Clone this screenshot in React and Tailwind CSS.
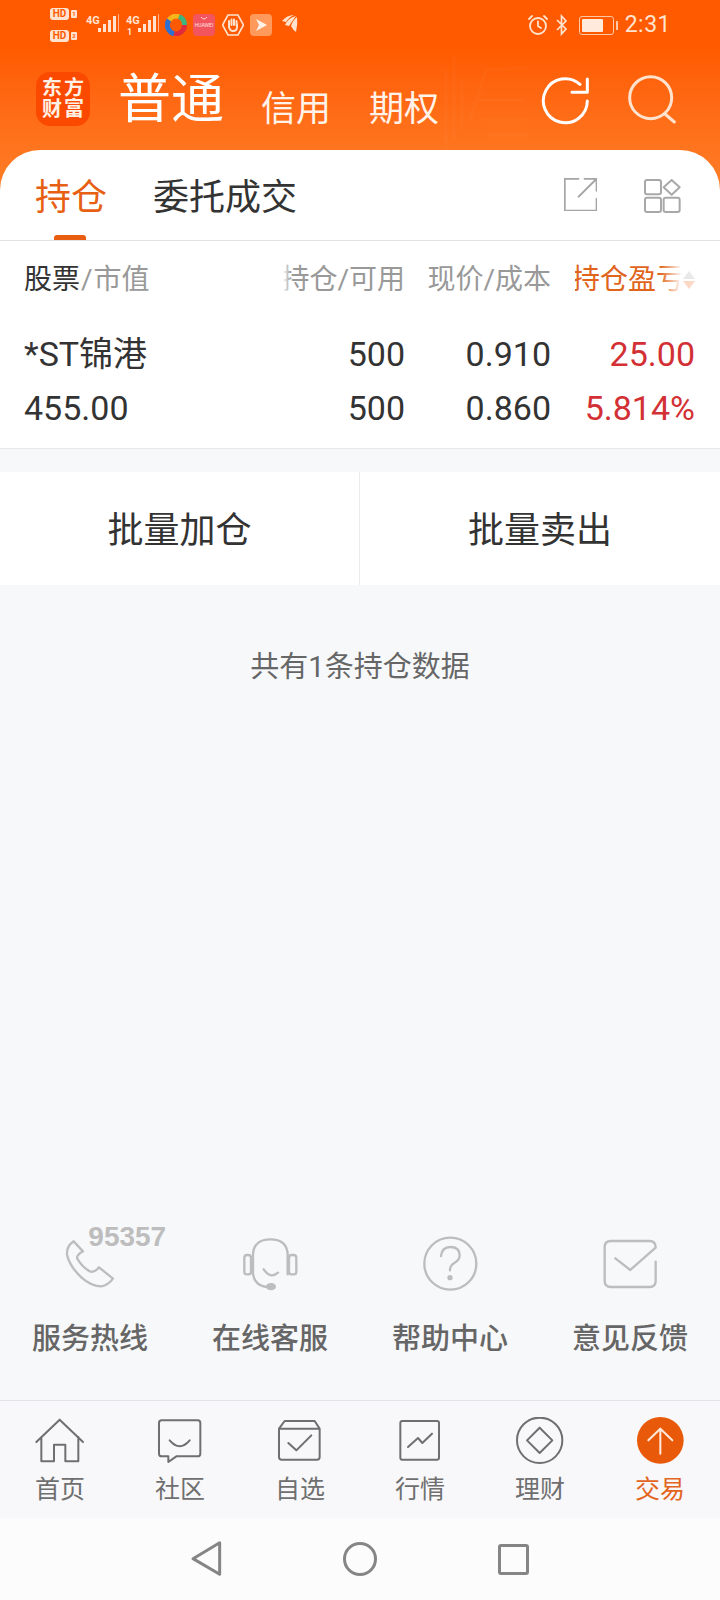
import React from "react";

// Small helper: every icon is drawn in a 3x grid, so it renders at a third of its viewBox.
function Ico({ x, y, w, h, className = "", children }) {
  return (
    <svg width={w / 3} height={h / 3} viewBox={`${x} ${y} ${w} ${h}`} fill="none" strokeLinecap="round" strokeLinejoin="round" className={`block shrink-0 ${className}`}>
      {children}
    </svg>
  );
}

function Signal({ second }) {
  return (
    <div className="relative w-[34px] h-[24px]">
      <span className="absolute left-0 top-[1px] text-[11px] font-bold leading-[12px] text-[#ffe3cf]">4G</span>
      {second && <span className="absolute left-[1px] top-[13px] text-[9px] font-bold leading-[10px] text-[#ffe3cf]">1</span>}
      <svg width="22" height="20" viewBox="0 0 22 20" className="absolute left-[12px] top-0">
        <g fill="#ffe3cf">
          <rect x="0" y="14" width="3" height="4" />
          <rect x="5" y="10" width="3" height="8" />
          <rect x="10" y="6" width="3" height="12" />
          <rect x="15" y="2" width="3" height="16" />
        </g>
        <rect x="20" y="0" width="1" height="18" fill="#ffb48a" />
      </svg>
    </div>
  );
}

function StatusBar() {
  return (
    <div className="h-[50px] flex items-start text-[#ffe3cf]">
      <div className="ml-[50px] mt-[8px] flex flex-col gap-[10px] w-[28px]">
        {["1", "2"].map((n) => (
          <div key={n} className="flex items-center gap-[2px]">
            <span className="w-[19px] h-[12px] rounded-[3px] bg-[#ffe3cf] text-[#ff5a00] text-[10px] font-bold leading-[12px] text-center">HD</span>
            <span className="w-[6px] h-[8px] rounded-[1px] bg-[#ffe3cf] text-[#ff5a00] text-[6px] font-bold leading-[8px] text-center">{n}</span>
          </div>
        ))}
      </div>
      <div className="ml-[8px] mt-[14px]"><Signal /></div>
      <div className="ml-[6px] mt-[14px]"><Signal second /></div>
      <svg width="22" height="22" viewBox="0 0 22 22" className="ml-[5px] mt-[14px]">
        <g fill="none" strokeWidth="5">
          <path d="M4 6 A9 9 0 0 1 14 2.5" stroke="#f6b51d" />
          <path d="M14 2.5 A9 9 0 0 1 19.5 11" stroke="#3fb47c" />
          <path d="M19.5 11 A9 9 0 0 1 9 19.8" stroke="#df2c3c" />
          <path d="M9 19.8 A9 9 0 0 1 4 6" stroke="#2e6fd0" />
        </g>
      </svg>
      <div className="ml-[6px] mt-[14px] w-[22px] h-[22px] rounded-[4px] bg-[#f2555e] flex flex-col items-center">
        <svg width="8" height="4" viewBox="0 0 8 4" className="mt-[3px]"><path d="M1 0 Q4 4 7 0" stroke="#ffd9d4" fill="none" /></svg>
        <span className="text-[5px] leading-[7px] mt-[1px] text-[#ffe3e0]">HUAWEI</span>
      </div>
      <svg width="22" height="22" viewBox="0 0 22 22" className="ml-[7px] mt-[14px]">
        <path d="M6 1 H16 L21.5 11 L16 21 H6 L0.5 11 Z" fill="none" stroke="#ffe3cf" strokeWidth="1.6" />
        <path d="M7 10 V7 M9.5 11 V5.5 M12 11 V5.5 M14.5 11 V7 M7 10 V13 Q8 17 11 17 Q15 17 15 13 V10" stroke="#ffe3cf" strokeWidth="2" fill="none" strokeLinecap="round" />
      </svg>
      <div className="ml-[6px] mt-[14px] w-[22px] h-[22px] rounded-[4px] bg-[#ff9a5c] flex items-center justify-center">
        <svg width="14" height="14" viewBox="0 0 14 14"><path d="M2 1 L13 7 L2 13 L5 7 Z" fill="#fff2e8" /></svg>
      </div>
      <svg width="18" height="20" viewBox="0 0 18 20" className="ml-[9px] mt-[14px]">
        <g fill="#ffe3cf">
          <path d="M1 7 Q6 1 13 1 Q8 3 5 8 Z" />
          <path d="M4 11 Q7 4 15 2 Q12 6 8 12 Z" />
          <path d="M10 12 Q12 6 16 3 Q17 10 15 18 Q12 16 10 12 Z" />
        </g>
      </svg>
      <div className="ml-auto mt-[14px] flex items-center text-[#ffe3cf]">
        <svg width="22" height="22" viewBox="0 0 22 22">
          <circle cx="11" cy="12" r="8" fill="none" stroke="#ffe3cf" strokeWidth="1.8" />
          <path d="M11 7.5 V12 L14 14 M2 5 L5 2 M17 2 L20 5" fill="none" stroke="#ffe3cf" strokeWidth="1.8" strokeLinecap="round" />
        </svg>
        <svg width="14" height="22" viewBox="0 0 14 22" className="ml-[6px]">
          <path d="M2 6 L11 15 L6.5 20 V2 L11 7 L2 16" fill="none" stroke="#ffe3cf" strokeWidth="1.7" />
        </svg>
        <div className="ml-[10px] flex items-center">
          <div className="w-[35px] h-[19px] rounded-[3px] border border-[#ffc7a3] p-[2px]">
            <div className="w-[21px] h-full rounded-[1px] bg-[#ffeadc]" />
          </div>
          <div className="ml-[2px] w-[2px] h-[9px] bg-[#ffc7a3]" />
        </div>
        <span className="ml-[7px] mr-[49px] text-[23px] leading-[22px] tracking-[0.5px] text-[#ffe3cf]">2:31</span>
      </div>
    </div>
  );
}

function Header() {
  return (
    <div className="relative h-[190px] bg-linear-to-b from-[#ff5a00] from-25% to-[#ff7e26] text-white">
      <svg width="90" height="100" viewBox="0 0 90 100" className="absolute left-[436px] top-[50px]">
        <g stroke="#ffffff" strokeOpacity="0.025" fill="none">
          <path d="M10 100 V20 M18 90 V5 M26 80 V30 M34 70 L50 20 L90 18 M40 50 H90 M46 70 H90 M52 85 H90" strokeWidth="3" />
        </g>
      </svg>
      <StatusBar />
      <div className="relative flex items-start h-[90px]">
        <div className="ml-[36px] mt-[22px] w-[54px] h-[54px] rounded-[14px] bg-[#fb4a00] grid grid-cols-2 place-items-center px-[5px] py-[6px] text-[20px] leading-[21px] font-bold text-[#fff0e4]">
          <span>东</span><span>方</span><span>财</span><span>富</span>
        </div>
        <span className="ml-[28px] mt-[15px] text-[53px] leading-[70px]">普通</span>
        <span className="ml-[37px] mt-[35px] text-[35px] leading-[50px] text-[#fff3ea]">信用</span>
        <span className="ml-[38px] mt-[35px] text-[35px] leading-[50px] text-[#fff3ea]">期权</span>
        <Ico x={-6} y={-6} w={156} h={156} className="ml-[101px] mt-[25px]">
          <path d="M136 72 A66 66 0 1 1 114 22" stroke="#fff" strokeWidth="9" />
          <path d="M90 46 H136 V6" stroke="#fff" strokeWidth="9" />
        </Ico>
        <Ico x={-6} y={-6} w={156} h={156} className="ml-[35px] mt-[24px]">
          <circle cx="65" cy="65" r="63" stroke="#ffe3cf" strokeWidth="9" />
          <path d="M108 114 L136 138" stroke="#ffe3cf" strokeWidth="9" />
        </Ico>
      </div>
    </div>
  );
}

function Tabs() {
  return (
    <div className="relative h-[91px] flex items-start border-b border-[#e2e2e2]">
      <div className="relative ml-[35px] mt-[23px] text-[36px] leading-[50px] text-[#e65f12]">
        持仓
        <div className="absolute left-[19px] top-[62px] w-[32px] h-[5px] rounded-t-[3px] bg-[#e85d10]" />
      </div>
      <span className="ml-[46px] mt-[23px] text-[36px] leading-[50px] text-[#333]">委托成交</span>
      <Ico x={0} y={0} w={100} h={100} className="ml-auto mt-[28px]">
        <path d="M43 2 H2 V98 H98 V62 M62 2 H98 V38 M44 56 L98 2" stroke="#a5a5a5" strokeWidth="6" />
      </Ico>
      <Ico x={0} y={0} w={110} h={102} className="ml-[47px] mr-[39px] mt-[29px]">
        <g stroke="#a8a8a8" strokeWidth="6">
          <rect x="3" y="3" width="48" height="43" rx="6" />
          <path d="M83 3 L107 25 L83 47 L59 25 Z" />
          <rect x="3" y="56" width="48" height="43" rx="6" />
          <rect x="59" y="56" width="48" height="43" rx="6" />
        </g>
      </Ico>
    </div>
  );
}

// Column heading clipped at its left edge, with a soft fade over the cut.
function ClippedHead({ children, className = "" }) {
  return (
    <div className={`relative overflow-hidden flex justify-end whitespace-nowrap ${className}`}>
      <span className="shrink-0">{children}</span>
      <div className="absolute left-0 top-0 bottom-0 w-[8px] bg-linear-to-r from-white to-transparent" />
    </div>
  );
}

function Holdings() {
  const grid = "grid grid-cols-[259px_122px_146px_144px] pl-[24px] pr-[25px]";
  return (
    <div className="bg-white border-b border-[#e8e8e8]">
      <div className={`${grid} pt-[19px] h-[64px] text-[28px] leading-[40px] text-[#999]`}>
        <div><span className="text-[#333]">股票</span><span className="mx-[1px]">/</span><span>市值</span></div>
        <ClippedHead>持仓/可用</ClippedHead>
        <ClippedHead>现价/成本</ClippedHead>
        <div className="flex justify-end">
          <div className="relative w-[107px] overflow-hidden text-[#e0641b] whitespace-nowrap flex justify-end">
            <span className="shrink-0 mr-[-2px]">持仓盈亏</span>
            <div className="absolute right-0 top-0 bottom-0 w-[22px] bg-linear-to-l from-white to-transparent" />
          </div>
          <div className="w-[13px] flex flex-col items-center gap-[2px] pt-[11px]">
            <div className="w-0 h-0 border-x-[6px] border-x-transparent border-b-[8px] border-b-[#e9e9e9]" />
            <div className="w-0 h-0 border-x-[6px] border-x-transparent border-t-[8px] border-t-[#fbd9c6]" />
          </div>
        </div>
      </div>
      <div className={`${grid} mt-[22px] text-[34px] leading-[54px] text-[#333] text-right`}>
        <div className="text-left">*ST锦港</div>
        <div>500</div>
        <div>0.910</div>
        <div className="text-[#d23034]">25.00</div>
        <div className="text-left">455.00</div>
        <div>500</div>
        <div>0.860</div>
        <div className="text-[#d23034]">5.814%</div>
      </div>
      <div className="h-[13px]" />
    </div>
  );
}

function Help() {
  const stroke = 7;
  const items = [
    {
      label: "服务热线",
      icon: (
        <div className="relative">
          <Ico x={190} y={90} w={160} h={160}>
            <path d="M222 100 Q200 115 202 140 Q210 175 245 208 Q275 235 305 235 Q325 232 340 212 L298 178 Q285 195 270 190 Q245 175 232 150 Q232 140 250 130 Z" stroke="#bdbdbd" strokeWidth={stroke} />
          </Ico>
          <span className="absolute left-[25px] top-[-13px] text-[28px] leading-[24px] font-bold text-[#bdbdbd] font-[family-name:'Liberation_Sans',sans-serif]">95357</span>
        </div>
      ),
    },
    {
      label: "在线客服",
      icon: (
        <Ico x={725} y={75} w={170} h={170}>
          <g stroke="#bdbdbd" strokeWidth={stroke}>
            <path d="M758 130 Q760 85 810 85 Q860 85 862 130 V190 M758 130 V190 Q765 228 805 228" />
            <rect x="732" y="132" width="20" height="58" rx="8" />
            <rect x="866" y="132" width="22" height="58" rx="8" />
            <path d="M790 175 Q810 205 833 185" />
          </g>
          <ellipse cx="812" cy="227" rx="15" ry="11" fill="#bdbdbd" />
        </Ico>
      ),
    },
    {
      label: "帮助中心",
      icon: (
        <Ico x={185} y={75} w={170} h={170}>
          <circle cx="270" cy="158" r="78" stroke="#bdbdbd" strokeWidth={stroke} />
          <path d="M242 135 Q245 108 270 108 Q298 108 298 133 Q298 148 282 156 Q269 163 269 178" stroke="#bdbdbd" strokeWidth={stroke} />
          <circle cx="269" cy="200" r="8" fill="#bdbdbd" />
        </Ico>
      ),
    },
    {
      label: "意见反馈",
      icon: (
        <Ico x={725} y={75} w={170} h={170}>
          <path d="M886 152 V210 Q886 228 868 228 H752 Q733 228 733 210 V108 Q733 90 752 90 H868 Q886 90 886 110 L810 177 L765 142" stroke="#bdbdbd" strokeWidth={stroke} />
        </Ico>
      ),
    },
  ];
  return (
    <div className="grid grid-cols-4 h-[164px]">
      {items.map((it) => (
        <div key={it.label} className="flex flex-col items-center">
          <div className="h-[57px] flex items-center justify-center">{it.icon}</div>
          <span className="mt-[26px] text-[29px] leading-[40px] font-medium text-[#666]">{it.label}</span>
        </div>
      ))}
    </div>
  );
}

function TabBar() {
  const g = "#6f6f6f";
  const w = 6;
  const tabs = [
    {
      label: "首页",
      icon: (
        <Ico x={100} y={80} w={160} h={144}>
          <path d="M110 155 L180 88 L250 155 M125 140 V213 H163 V163 H197 V213 H236 V140" stroke={g} strokeWidth={w} />
        </Ico>
      ),
    },
    {
      label: "社区",
      icon: (
        <Ico x={460} y={80} w={160} h={144}>
          <path d="M486 90 H594 Q602 90 602 98 V190 Q602 198 594 198 H530 L506 215 V198 H486 Q478 198 478 190 V98 Q478 90 486 90 Z M510 150 Q540 185 570 150" stroke={g} strokeWidth={w} />
        </Ico>
      ),
    },
    {
      label: "自选",
      icon: (
        <Ico x={820} y={80} w={160} h={144}>
          <path d="M838 115 L855 92 H945 L960 115 M838 115 H960 V200 Q960 208 952 208 H846 Q838 208 838 200 Z M866 158 L890 180 L935 135" stroke={g} strokeWidth={w} />
        </Ico>
      ),
    },
    {
      label: "行情",
      icon: (
        <Ico x={100} y={80} w={160} h={144}>
          <rect x="122" y="92" width="116" height="116" rx="6" stroke={g} strokeWidth={w} />
          <path d="M145 170 L175 143 L188 158 L217 130" stroke={g} strokeWidth={w} />
        </Ico>
      ),
    },
    {
      label: "理财",
      icon: (
        <Ico x={460} y={80} w={160} h={144}>
          <circle cx="540" cy="150" r="68" stroke={g} strokeWidth={w} />
          <path d="M540 112 L578 150 L540 188 L502 150 Z" stroke={g} strokeWidth={w} />
        </Ico>
      ),
    },
    {
      label: "交易",
      active: true,
      icon: (
        <Ico x={820} y={80} w={160} h={144}>
          <circle cx="902" cy="150" r="70" fill="#e85a0a" />
          <path d="M902 190 V118 M866 150 L902 115 L938 150" stroke="#ffe9dc" strokeWidth={w} />
        </Ico>
      ),
    },
  ];
  return (
    <div className="h-[118px] grid grid-cols-6 bg-[#f8f8fa] border-t border-[#e4e4e8]">
      {tabs.map((t) => (
        <div key={t.label} className="flex flex-col items-center pt-[16px]">
          {t.icon}
          <span className={`mt-[7px] text-[25px] leading-[36px] ${t.active ? "text-[#e3651f]" : "text-[#6f6f6f]"}`}>{t.label}</span>
        </div>
      ))}
    </div>
  );
}

function SystemNav() {
  return (
    <div className="h-[82px] bg-[#fcfcfc] grid grid-cols-[154px_153px_154px] justify-center place-items-center">
      <Ico x={560} y={445} w={116} h={124}>
        <path d="M658 459 L578 507 L658 554 Z" stroke="#858585" strokeWidth="9" />
      </Ico>
      <div className="w-[34px] h-[34px] rounded-full border-[3px] border-[#858585]" />
      <div className="w-[31px] h-[31px] rounded-[3px] border-[3px] border-[#858585]" />
    </div>
  );
}

export default function App() {
  return (
    <div className="w-[720px] h-[1600px] flex flex-col overflow-hidden bg-[#f7f8fa] font-[family-name:Roboto,'Noto_Sans_CJK_SC',sans-serif]">
      <Header />
      <div className="relative -mt-[40px] flex-1 flex flex-col min-h-0">
        <div className="rounded-t-[40px] bg-white">
          <Tabs />
        </div>
        <Holdings />
        <div className="mt-[23px] h-[113px] bg-white grid grid-cols-2 text-[36px] text-[#333]">
          <div className="flex items-center justify-center pt-[5px] border-r border-[#ececec]">批量加仓</div>
          <div className="flex items-center justify-center pt-[5px]">批量卖出</div>
        </div>
        <div className="mt-[60px] text-center text-[29px] leading-[44px] text-[#666]">共有1条持仓数据</div>
        <div className="mt-auto">
          <Help />
        </div>
      </div>
      <TabBar />
      <SystemNav />
    </div>
  );
}
